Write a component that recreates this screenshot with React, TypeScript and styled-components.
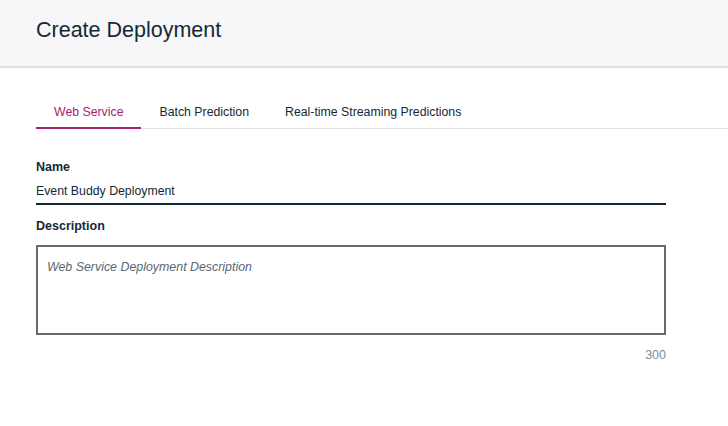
import React from "react";
import styled, { createGlobalStyle } from "styled-components";

const Global = createGlobalStyle`
  html, body { margin: 0; padding: 0; background: #ffffff; }
  body { font-family: "Liberation Sans", Arial, sans-serif; color: #152935; }
  * { box-sizing: border-box; }
`;

const Page = styled.div`
  width: 728px;
  min-height: 426px;
  background: #ffffff;
`;

const Header = styled.header`
  height: 68px;
  background: #f7f7f9;
  border-bottom: 2px solid #dfe3e6;
  padding: 18px 0 0 36px;
`;

const Title = styled.h1`
  margin: 0;
  font-size: 21.5px;
  line-height: 24px;
  font-weight: 400;
  color: #152935;
`;

const TabList = styled.nav`
  display: flex;
  margin: 35px 0 0 36px;
  border-bottom: 1px solid #dfe3e6;
`;

const Tab = styled.button<{ $active?: boolean }>`
  font-family: inherit;
  font-size: 12.3px;
  line-height: 16px;
  padding: 1px 18px 7px;
  margin: 0 0 -1px;
  background: none;
  border: none;
  border-bottom: 2px solid ${(p) => (p.$active ? "#a6236c" : "transparent")};
  color: ${(p) => (p.$active ? "#a6236c" : "#152935")};
  cursor: pointer;
  white-space: nowrap;
`;

const Form = styled.form`
  width: 630px;
  margin: 30px 0 0 36px;
  display: flex;
  flex-direction: column;
`;

const Label = styled.label<{ $gap: number }>`
  font-size: 12.5px;
  line-height: 16px;
  font-weight: 700;
  color: #152935;
  margin-bottom: ${(p) => p.$gap}px;
`;

const TextInput = styled.input`
  font-family: inherit;
  font-size: 12.3px;
  line-height: 16px;
  height: 22px;
  padding: 0 0 4px;
  border: none;
  border-bottom: 2px solid #152935;
  background: transparent;
  color: #152935;
  outline: none;
  margin-bottom: 13px;
`;

const TextArea = styled.textarea`
  font-family: inherit;
  font-size: 12.4px;
  line-height: 16px;
  height: 90px;
  padding: 12px 9px;
  border: 2px solid #6a6a6a;
  resize: none;
  outline: none;
  color: #152935;
  &::placeholder {
    font-style: italic;
    color: #5a6872;
    opacity: 1;
  }
`;

const Counter = styled.div`
  margin-top: 12px;
  text-align: right;
  font-size: 12.5px;
  line-height: 16px;
  color: #7f8c96;
`;

export default function App() {
  return (
    <Page>
      <Global />
      <Header>
        <Title>Create Deployment</Title>
      </Header>
      <TabList>
        <Tab $active>Web Service</Tab>
        <Tab>Batch Prediction</Tab>
        <Tab>Real-time Streaming Predictions</Tab>
      </TabList>
      <Form onSubmit={(e) => e.preventDefault()}>
        <Label $gap={8} htmlFor="name">Name</Label>
        <TextInput id="name" defaultValue="Event Buddy Deployment" />
        <Label $gap={11} htmlFor="desc">Description</Label>
        <TextArea id="desc" placeholder="Web Service Deployment Description" />
        <Counter>300</Counter>
      </Form>
    </Page>
  );
}
